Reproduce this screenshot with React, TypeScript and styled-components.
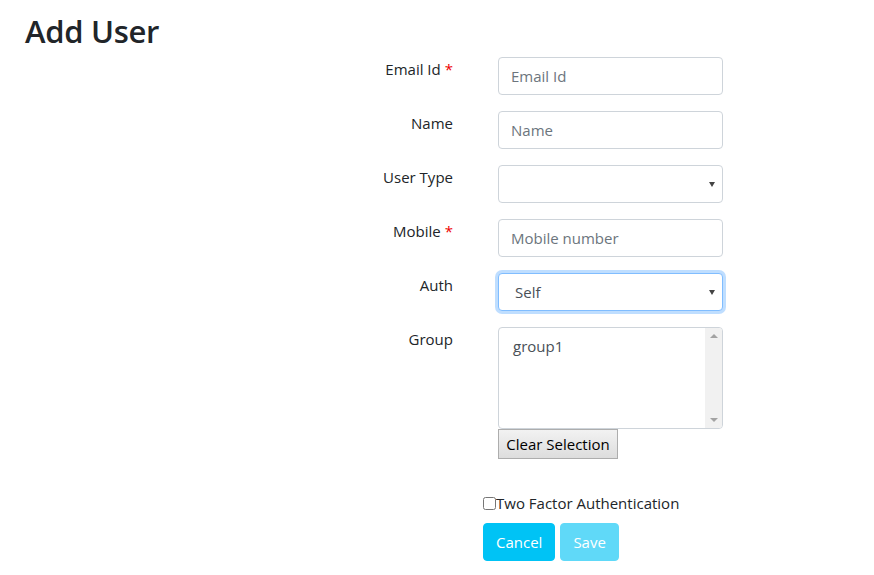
import * as React from 'react'
import styled, { createGlobalStyle, css } from 'styled-components'

const GlobalStyle = createGlobalStyle`
  body {
    margin: 0;
    font-family: 'Open Sans', 'Noto Sans', sans-serif;
    font-size: 16px;
    color: #212529;
    background: #fff;
  }
  * { box-sizing: border-box; }
`

const Page = styled.main`
  padding: 12px 25px 0 25px;
`

const Title = styled.h1`
  margin: 0;
  font-size: 31px;
  font-weight: 600;
  line-height: 38px;
  letter-spacing: -0.3px;
`

const Form = styled.form`
  margin-top: 7px;
  display: grid;
  grid-template-columns: 428px 225px;
  column-gap: 45px;
  row-gap: 16px;
  align-items: start;
`

const Label = styled.label`
  text-align: right;
  line-height: 24px;
  font-size: 15px;
`

const Required = styled.span`
  color: #e00;
  margin-left: 4px;
`

const fieldBase = css`
  width: 225px;
  height: 38px;
  border: 1px solid #ced4da;
  border-radius: 4px;
  padding: 0 12px;
  font-family: inherit;
  font-size: 15px;
  color: #495057;
  background: #fff;
  outline: none;
`

const Input = styled.input`
  ${fieldBase}
  &::placeholder {
    color: #6c757d;
  }
`

const SelectWrap = styled.div`
  position: relative;
  width: 225px;

  &::after {
    content: '';
    position: absolute;
    right: 8px;
    top: 17px;
    border-left: 3px solid transparent;
    border-right: 3px solid transparent;
    border-top: 5px solid #444;
    pointer-events: none;
  }
`

const Select = styled.select<{ $focused?: boolean }>`
  ${fieldBase}
  appearance: none;
  padding-left: 16px;
  ${(p) =>
    p.$focused &&
    css`
      border-color: #80bdff;
      box-shadow: 0 0 0 3px rgba(0, 123, 255, 0.25);
    `}
`

const GroupField = styled.div`
  display: flex;
  flex-direction: column;
  align-items: flex-start;
`

const ListBox = styled.div`
  width: 225px;
  height: 102px;
  border: 1px solid #ced4da;
  border-radius: 4px;
  display: flex;
  overflow: hidden;
`

const ListItems = styled.ul`
  flex: 1;
  margin: 0;
  padding: 8px 14px;
  list-style: none;
  font-size: 15px;
  color: #495057;
  line-height: 20px;
`

const ScrollTrack = styled.div`
  width: 17px;
  background: #f1f1f1;
  display: flex;
  flex-direction: column;
  justify-content: space-between;
  align-items: center;
  padding: 6px 0;
`

const Arrow = styled.span<{ $down?: boolean }>`
  width: 0;
  height: 0;
  border-left: 4px solid transparent;
  border-right: 4px solid transparent;
  ${(p) =>
    p.$down
      ? css`border-top: 4px solid #a3a3a3;`
      : css`border-bottom: 4px solid #a3a3a3;`}
`

const ClearButton = styled.button`
  height: 30px;
  width: 120px;
  padding: 0 6px;
  font-family: inherit;
  font-size: 15px;
  color: #000;
  border: 1px solid #adadad;
  border-radius: 0;
  background: linear-gradient(#f2f2f2, #dddddd);
`

const Footer = styled.div`
  margin: 32px 0 0 458px;
  display: flex;
  flex-direction: column;
  gap: 8px;
`

const CheckRow = styled.label`
  display: flex;
  align-items: center;
  line-height: 24px;
  font-size: 15px;

  input {
    margin: 0;
    width: 13px;
    height: 13px;
  }
`

const Actions = styled.div`
  display: flex;
  gap: 5px;
`

const InfoButton = styled.button<{ $disabled?: boolean }>`
  height: 38px;
  padding: 0 12px;
  border: 1px solid #00c3f5;
  border-radius: 4px;
  background: #00c3f5;
  color: #fff;
  font-family: inherit;
  font-size: 15px;
  ${(p) =>
    p.$disabled &&
    css`
      opacity: 0.62;
    `}
`

export default function App() {
  return (
    <Page>
      <GlobalStyle />
      <Title>Add User</Title>
      <Form>
        <Label>
          Email Id<Required>*</Required>
        </Label>
        <Input placeholder="Email Id" />

        <Label>Name</Label>
        <Input placeholder="Name" />

        <Label>User Type</Label>
        <SelectWrap>
          <Select defaultValue="">
            <option value=""></option>
          </Select>
        </SelectWrap>

        <Label>
          Mobile<Required>*</Required>
        </Label>
        <Input placeholder="Mobile number" />

        <Label>Auth</Label>
        <SelectWrap>
          <Select $focused defaultValue="self">
            <option value="self">Self</option>
          </Select>
        </SelectWrap>

        <Label>Group</Label>
        <GroupField>
          <ListBox>
            <ListItems>
              <li>group1</li>
            </ListItems>
            <ScrollTrack>
              <Arrow />
              <Arrow $down />
            </ScrollTrack>
          </ListBox>
          <ClearButton type="button">Clear Selection</ClearButton>
        </GroupField>
      </Form>
      <Footer>
        <CheckRow>
          <input type="checkbox" />
          Two Factor Authentication
        </CheckRow>
        <Actions>
          <InfoButton type="button">Cancel</InfoButton>
          <InfoButton type="button" $disabled>
            Save
          </InfoButton>
        </Actions>
      </Footer>
    </Page>
  )
}
